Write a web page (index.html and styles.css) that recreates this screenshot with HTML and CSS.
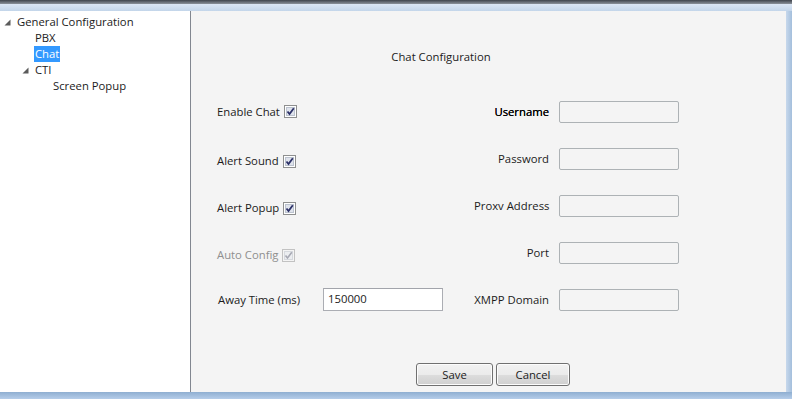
FILE: index.html
```html
<!DOCTYPE html>
<html lang="en">
<head>
    <meta charset="UTF-8">
    <title>Chat Configuration</title>
    <link rel="stylesheet" href="styles.css">
</head>
<body>
<div class="topbar"></div>
<div class="frametop"></div>
<div class="main">
    <div class="tree">
        <ul class="level">
            <li>
                <div class="row"><span class="exp"><svg width="7" height="7" viewBox="0 0 7 7"><polygon points="6.5,0.5 6.5,6.5 0.5,6.5" fill="#5b5b5b"/></svg></span><span class="txt">General Configuration</span></div>
                <ul class="level sub">
                    <li><div class="row"><span class="exp"></span><span class="txt">PBX</span></div></li>
                    <li><div class="row"><span class="exp"></span><span class="txt sel">Chat</span></div></li>
                    <li>
                        <div class="row"><span class="exp"><svg width="7" height="7" viewBox="0 0 7 7"><polygon points="6.5,0.5 6.5,6.5 0.5,6.5" fill="#5b5b5b"/></svg></span><span class="txt">CTI</span></div>
                        <ul class="level sub">
                            <li><div class="row"><span class="exp"></span><span class="txt">Screen Popup</span></div></li>
                        </ul>
                    </li>
                </ul>
            </li>
        </ul>
    </div>
    <div class="content">
        <p class="title">Chat Configuration</p>
        <div class="form">
            <div class="left"><span>Enable Chat</span><span class="chk"><svg width="13" height="13" viewBox="0 0 13 13"><rect x="0.5" y="0.5" width="12" height="12" fill="#fff" stroke="#8e8f8f"/><rect x="2.5" y="2.5" width="8" height="8" fill="#dfe3ec" stroke="#bcc3cf"/><path d="M3.5 6.5 L5.5 9 L9.8 3.3" fill="none" stroke="#2c3168" stroke-width="1.8"/></svg></span></div>
            <label class="rlabel strong">Username</label>
            <span class="field"></span>

            <div class="left low"><span>Alert Sound</span><span class="chk"><svg width="13" height="13" viewBox="0 0 13 13"><rect x="0.5" y="0.5" width="12" height="12" fill="#fff" stroke="#8e8f8f"/><rect x="2.5" y="2.5" width="8" height="8" fill="#dfe3ec" stroke="#bcc3cf"/><path d="M3.5 6.5 L5.5 9 L9.8 3.3" fill="none" stroke="#2c3168" stroke-width="1.8"/></svg></span></div>
            <label class="rlabel">Password</label>
            <span class="field"></span>

            <div class="left low"><span>Alert Popup</span><span class="chk"><svg width="13" height="13" viewBox="0 0 13 13"><rect x="0.5" y="0.5" width="12" height="12" fill="#fff" stroke="#8e8f8f"/><rect x="2.5" y="2.5" width="8" height="8" fill="#dfe3ec" stroke="#bcc3cf"/><path d="M3.5 6.5 L5.5 9 L9.8 3.3" fill="none" stroke="#2c3168" stroke-width="1.8"/></svg></span></div>
            <label class="rlabel">Proxv Address</label>
            <span class="field"></span>

            <div class="left low disabled"><span>Auto Config</span><span class="chk"><svg width="13" height="13" viewBox="0 0 13 13"><rect x="0.5" y="0.5" width="12" height="12" fill="#f4f4f4" stroke="#c2c2c2"/><rect x="2.5" y="2.5" width="8" height="8" fill="#eceef1" stroke="#d6d9de"/><path d="M3.5 6.5 L5.5 9 L9.8 3.3" fill="none" stroke="#a7a9b4" stroke-width="1.6"/></svg></span></div>
            <label class="rlabel">Port</label>
            <span class="field"></span>

            <div class="left"><span class="away">Away Time (ms)</span><span class="input">150000</span></div>
            <label class="rlabel">XMPP Domain</label>
            <span class="field"></span>
        </div>
        <div class="buttons">
            <button class="btn save">Save</button>
            <button class="btn cancel">Cancel</button>
        </div>
    </div>
    <div class="frameright"></div>
</div>
<div class="framebottom"></div>
</body>
</html>
```

FILE: styles.css
```css
* {
    margin: 0;
    padding: 0;
    list-style: none;
    box-sizing: border-box;
}

body {
    width: 792px;
    height: 399px;
    overflow: hidden;
    font: 11.3px/16px "Open Sans", "Noto Sans", sans-serif;
    color: #1b1b1b;
    background: #f4f4f4;
}

.topbar {
    height: 4px;
    background: linear-gradient(#3f444c, #8b929b);
}

.frametop {
    height: 7px;
    background: linear-gradient(#dbe6f4, #c3d5ea);
}

.main {
    display: flex;
    height: 381px;
}

.tree {
    width: 191px;
    background: #fff;
    border-right: 1px solid #828790;
    padding-top: 3px;
}

.sub {
    padding-left: 18px;
}

.row {
    display: flex;
    height: 16px;
    align-items: center;
}

.exp {
    width: 17px;
    height: 16px;
    padding: 5px 0 0 4px;
}

.exp svg {
    display: block;
}

.txt {
    padding: 0 1px;
    margin-left: -1px;
    line-height: 16px;
    white-space: nowrap;
}

.txt.sel {
    background: #3399ff;
    color: #fff;
}

.content {
    flex: 1;
    display: flex;
    flex-direction: column;
    background: #f4f4f4;
    padding: 38px 0 6px 26px;
}

.title {
    width: 448px;
    text-align: center;
    height: 16px;
}

.form {
    display: grid;
    grid-template-columns: 247px 75px 120px;
    grid-auto-rows: 47px;
    column-gap: 10px;
    margin-top: 23px;
    align-items: center;
}

.left {
    display: flex;
    align-items: center;
}

.left.low {
    margin-top: 5px;
}

.left.disabled {
    color: #8f8f8f;
}

.chk {
    margin-left: 4px;
    height: 13px;
}

.chk svg {
    display: block;
}

.away {
    width: 106px;
    padding-left: 1px;
}

.input {
    width: 120px;
    height: 23px;
    border: 1px solid #abadb3;
    border-top-color: #a2a4ab;
    background: #fff;
    padding: 2px 0 0 4px;
}

.rlabel {
    text-align: right;
    white-space: nowrap;
}

.rlabel.strong {
    color: #000;
    text-shadow: 0 0 0.5px #000;
}

.field {
    height: 22px;
    border: 1px solid #adb2b5;
    border-radius: 2px;
    background: #f4f4f4;
}

.buttons {
    margin-top: auto;
    display: flex;
    gap: 3px;
    padding-left: 199px;
}

.btn {
    height: 23px;
    font: inherit;
    color: #1b1b1b;
    border: 1px solid #707070;
    border-radius: 3px;
    background: linear-gradient(#f2f2f2 0%, #ebebeb 50%, #dddddd 51%, #cfcfcf 100%);
    box-shadow: inset 0 0 0 1px #fcfcfc;
}

.save {
    width: 77px;
}

.cancel {
    width: 74px;
}

.frameright {
    width: 6px;
    background: linear-gradient(90deg, #c7d8ec, #a4bfdc);
}

.framebottom {
    height: 7px;
    background: linear-gradient(#8faed1, #b5cde9);
}
```
